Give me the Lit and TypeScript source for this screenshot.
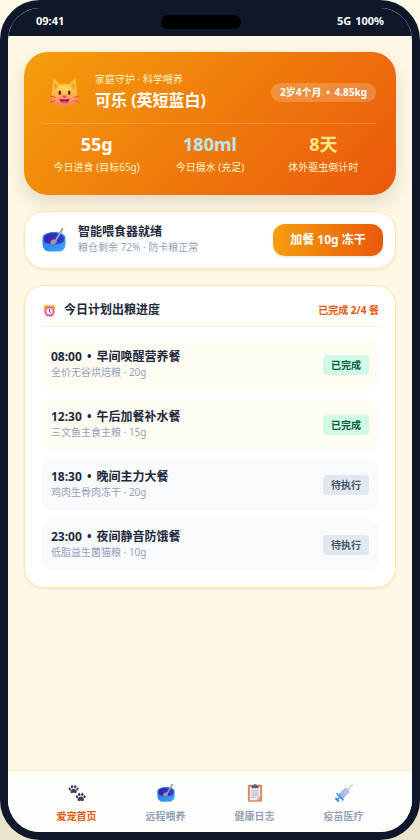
import { LitElement, html, css, svg } from "lit";
import { customElement } from "lit/decorators.js";
import { classMap } from "lit/directives/class-map.js";

const bowl = (id: string) => html`<svg viewBox="0 0 24 24" aria-hidden="true">
  <defs>
    <linearGradient id="${id}a" x1="0" y1="0" x2="1" y2="1"><stop offset="0" stop-color="#2b6fe0"/><stop offset="0.5" stop-color="#2f8bf2"/><stop offset="1" stop-color="#45a5fb"/></linearGradient>
    <linearGradient id="${id}b" x1="0" y1="0" x2="1" y2="0"><stop offset="0" stop-color="#3a20a8"/><stop offset="1" stop-color="#2840d8"/></linearGradient>
  </defs>
  <path d="M.5 9.500C.5 6.500 5.500 4 12 4s11.500 2.500 11.500 5.500V15c0 5-2.500 8.500-6.500 8.500H7C3 23.500.5 20 .5 15z" fill="url(#${id}a)"/>
  <path d="M2.200 9C3 6.700 7 5.300 12 5.300s9 1.400 9.800 3.700c.5 2.500.2 5-1.800 6-4 1.500-12 1.500-16 0-2-1-2.300-3.500-1.800-6z" fill="url(#${id}b)"/>
  <path d="M13.200 13.200 20.400 1" stroke="#8b8796" stroke-width="2" stroke-linecap="round"/>
  <path d="M14 12 20.500 1" stroke="#c9c5d0" stroke-width=".7" stroke-linecap="round"/>
  <path d="M8.500 15.500c-.6-2 1-4 3-4.200 2.300-.2 3.800 1.500 3 3.200-.5 1-1.500 1.300-2.800 1.500-1.200.2-2.500.3-3.200-.5z" fill="#9d99ab"/>
</svg>`;

const cat = html`<svg viewBox="0 0 32 32" aria-hidden="true">
  <defs>
    <linearGradient id="catFace" x1="0" y1="0" x2="0" y2="1"><stop offset="0" stop-color="#ffc02e"/><stop offset=".55" stop-color="#ffb846"/><stop offset="1" stop-color="#ff7c72"/></linearGradient>
    <radialGradient id="catGlow" cx=".5" cy=".3" r=".5"><stop offset="0" stop-color="#ffdb55"/><stop offset="1" stop-color="#ffdb55" stop-opacity="0"/></radialGradient>
  </defs>
  <path d="M3.500 2.200c.2-1 1.200-1.200 2-.5L12 7.500c2.500-.7 5.500-.7 8 0l6.500-5.800c.8-.7 1.800-.5 2 .5L29.500 14c.8 3 .8 6 .2 9-.7 4.500-3.500 7-8 7H10.300c-4.500 0-7.300-2.500-8-7-.6-3-.6-6 .2-9z" fill="url(#catFace)"/>
  <path d="M5 5.500 9.800 9.200 5 13zM27 5.500 22.200 9.200 27 13z" fill="#f2953d"/>
  <ellipse cx="16" cy="14" rx="12" ry="8" fill="url(#catGlow)"/>
  <ellipse cx="10.800" cy="16.300" rx="1.400" ry="2.400" fill="#4c2c38"/>
  <ellipse cx="21.200" cy="16.300" rx="1.400" ry="2.400" fill="#4c2c38"/>
  <path d="M14 19.200h4c.7 0 1 .6.500 1.100L16.700 22c-.4.400-1 .4-1.400 0l-1.800-1.700c-.5-.5-.2-1.100.5-1.100z" fill="#ff3d92"/>
  <path d="M10.500 22.800c3.500 1.200 7.500 1.200 11 0-.3 3-2.500 5-5.500 5s-5.200-2-5.500-5z" fill="#8d2145"/>
  <path d="M13 26.300c1.600-1 4.400-1 6 0-.8 1-1.800 1.500-3 1.500s-2.200-.5-3-1.500z" fill="#ff5b86"/>
  <path d="m.5 20 5 1.500M.5 26.500l5-1.700M31.500 20l-5 1.500M31.500 26.500l-5-1.700" stroke="#ef5055" stroke-width="1.200" stroke-linecap="round"/>
</svg>`;

const clock = html`<svg viewBox="0 0 24 24" aria-hidden="true">
  <path d="M5 20 3.500 23h4zM19 20l1.500 3h-4z" fill="#b9a3bd"/>
  <path d="M1 7.500C1 3.500 4 1 8.500 1.500L10 4 4 10zM23 7.500c0-4-3-6.500-7.500-6L14 4l6 6z" fill="#ffb52e"/>
  <path d="M10.500 1h3v4h-3z" fill="#c9a9bd"/>
  <circle cx="12" cy="13.500" r="9.500" fill="#f0577f"/>
  <circle cx="12" cy="13.500" r="6" fill="#fbe6f4"/>
  <path d="M12 9.500v4.300l2 1.700" fill="none" stroke="#4d4054" stroke-width="1.800" stroke-linecap="round"/>
</svg>`;

const paw = svg`<path d="M7.500 6.300c1.900 0 4.100 1.900 4.300 3.700.2 1.900-1.600 2.200-2.600 2-.9-.3-2.400-.3-3.400 0-1 .2-2.800-.1-2.600-2 .2-1.800 2.300-3.700 4.300-3.700z"/>
  <ellipse cx="2.400" cy="6.600" rx="1.500" ry="2" transform="rotate(-25 2.400 6.600)"/>
  <ellipse cx="5.400" cy="3.500" rx="1.600" ry="2.200"/>
  <ellipse cx="9.600" cy="3.500" rx="1.600" ry="2.200"/>
  <ellipse cx="12.600" cy="6.600" rx="1.500" ry="2" transform="rotate(25 12.600 6.600)"/>`;

const paws = html`<svg viewBox="0 0 24 24" aria-hidden="true">
  <g fill="#493a58"><g>${paw}</g><g transform="translate(9.500 10.500)">${paw}</g></g>
</svg>`;

const clipboard = html`<svg viewBox="0 0 24 24" aria-hidden="true">
  <rect x="2.500" y="1" width="19" height="22.500" rx="1.500" fill="#d8875f"/>
  <path d="M5 4h14v12.500L14.500 21.500H5z" fill="#f1edf8"/>
  <path d="M19 16.500 14.500 21.500H19z" fill="#f2a273"/>
  <path d="M14.500 21.500v-5H19z" fill="#cfc6dc"/>
  <path d="M7.500 5.500V3.200c0-.8.600-1.200 1.300-1.200h1C10.200.8 11 .3 12 .3s1.800.5 2.200 1.700h1c.7 0 1.300.4 1.300 1.200v2.300z" fill="#655a70"/>
  <path d="M7 9.200h10M7 12h10M7 14.800h10M7 17.600h6" stroke="#a9a0b8" stroke-width="1.200"/>
</svg>`;

const syringe = html`<svg viewBox="0 0 24 24" aria-hidden="true">
  <path d="M16.500 7.500 23.500.5" stroke="#a7a2b4" stroke-width="1"/>
  <path d="m14.800 4.800 4.400 4.400-2 1.800-4-4z" fill="#7cb2ef"/>
  <path d="M12.500 5.500c.8-.7 1.800-.7 2.500 0l4 4c.6.6.6 1.500 0 2.300l-9 8.700-6.500-6.500z" fill="#b7c3f2"/>
  <path d="m8.500 11 5 5-3.500 4.500-6-6z" fill="#a9b4ed"/>
  <path d="m12.700 7.800 1.800 1.800M10.700 9.800l1.800 1.800M8.700 11.800l1.800 1.800" stroke="#7290d8" stroke-width=".9"/>
  <path d="m2.800 13.200 8 8" stroke="#3f91e8" stroke-width="2.200" stroke-linecap="round"/>
  <path d="m6 18-3.200 3.200" stroke="#4a83db" stroke-width="2"/>
  <path d="m1.200 19.500 3.300 3.300" stroke="#2b83e6" stroke-width="2.400" stroke-linecap="round"/>
</svg>`;

const dot = html`<span class="dot">•</span>`;

const stats = [
  { value: "55g", label: "今日进食 (目标65g)", tone: "white" },
  { value: "180ml", label: "今日摄水 (充足)", tone: "blue" },
  { value: "8天", label: "体外驱虫倒计时", tone: "yellow" },
];

const meals = [
  { time: "08:00", title: "早间唤醒营养餐", detail: "全价无谷烘焙粮 · 20g", done: true },
  { time: "12:30", title: "午后加餐补水餐", detail: "三文鱼主食主粮 · 15g", done: true },
  { time: "18:30", title: "晚间主力大餐", detail: "鸡肉生骨肉冻干 · 20g", done: false },
  { time: "23:00", title: "夜间静音防饿餐", detail: "低脂益生菌猫粮 · 10g", done: false },
];

const tabs = [
  { label: "爱宠首页", icon: paws, active: true },
  { label: "远程喂养", icon: bowl("tabBowl"), active: false },
  { label: "健康日志", icon: clipboard, active: false },
  { label: "疫苗医疗", icon: syringe, active: false },
];

@customElement("app-root")
export class AppRoot extends LitElement {
  static styles = css`
    :host {
      display: block;
      background: linear-gradient(#fefae9, #eae2cb);
      font-family: "Noto Sans", "Noto Sans CJK SC", sans-serif;
      font-size: 12px;
      line-height: 16px;
      color: #1e293b;
    }
    * { box-sizing: border-box; margin: 0; padding: 0; }
    svg { display: block; width: 100%; height: 100%; overflow: visible; }
    .phone {
      display: flex;
      flex-direction: column;
      min-height: 100vh;
      border: 8px solid #0f172a;
      border-radius: 40px;
      background: #fff8e6;
      overflow: hidden;
    }
    .status {
      display: flex;
      justify-content: space-between;
      align-items: center;
      height: 28px;
      padding: 0 28px;
      background: #0f172a;
      color: #fff;
      font-size: 11px;
      font-weight: 700;
    }
    .time, .signal { padding-bottom: 2px; }
    .island { width: 80px; height: 14px; border-radius: 7px; background: #000; }
    .signal { display: flex; gap: 4px; }
    main { flex: 1; display: flex; flex-direction: column; gap: 16px; padding: 16px; }
    .hero {
      padding: 20px;
      border-radius: 24px;
      background: linear-gradient(135deg, #f59e0b, #ea580c);
      box-shadow: 0 8px 20px rgba(80, 60, 20, 0.16);
      color: #fff;
    }
    .pet { display: flex; align-items: center; gap: 16px; height: 40px; padding-left: 6px; }
    .pet-icon { flex: none; width: 29px; height: 29px; }
    .grow { flex: 1; min-width: 0; }
    .dot { padding: 0 2px; }
    .eyebrow { margin-bottom: 2px; font-size: 10px; line-height: 14px; color: #fef3c7; }
    h1 { font-size: 16px; line-height: 24px; font-weight: 700; }
    .pill {
      padding: 0 9px;
      border-radius: 10px;
      background: rgba(255, 255, 255, 0.2);
      font-size: 10px;
      line-height: 19px;
      font-weight: 700;
      white-space: nowrap;
    }
    .stats {
      display: grid;
      grid-template-columns: repeat(3, 1fr);
      gap: 8px;
      margin-top: 11px;
      padding-top: 9px;
      border-top: 1px solid rgba(255, 255, 255, 0.2);
      text-align: center;
    }
    .value { margin-bottom: 4px; font-size: 18px; line-height: 22px; font-weight: 700; }
    .blue { color: #bae6fd; }
    .yellow { color: #fde68a; }
    .label { font-size: 10px; line-height: 16px; color: #fef3c7; white-space: nowrap; }
    .card {
      border: 1px solid #fde9a4;
      border-radius: 20px;
      background: #fff;
      box-shadow: 0 1px 3px rgba(120, 90, 20, 0.1);
    }
    .feeder { display: flex; align-items: center; gap: 12px; padding: 12px 12px 12px 17px; }
    .feeder-icon { flex: none; width: 24px; height: 24px; }
    h2, h3 { font-size: 12px; line-height: 16px; font-weight: 700; }
    .sub { padding-bottom: 2px; font-size: 10px; line-height: 14px; color: #94a3b8; }
    button {
      min-width: 110px;
      height: 32px;
      padding: 0 16px;
      border: 0;
      border-radius: 12px;
      background: linear-gradient(90deg, #f59e0b, #ea580c);
      box-shadow: 0 1px 3px rgba(0, 0, 0, 0.14);
      color: #fff;
      font: inherit;
      font-weight: 700;
      white-space: nowrap;
    }
    .plan { padding: 16px; }
    .plan-head {
      display: flex;
      align-items: center;
      gap: 8px;
      padding: 0 0 8px 2px;
      border-bottom: 1px solid #fef0c3;
    }
    .clock { flex: none; width: 13px; height: 13px; }
    .progress { font-size: 10px; font-weight: 700; color: #ea580c; }
    ul { display: grid; gap: 8px; margin-top: 12px; list-style: none; }
    .meal {
      display: flex;
      align-items: center;
      padding: 10px;
      border-radius: 12px;
      background: #f8fafc;
    }
    .meal.done { background: #fffcf3; }
    .badge {
      padding: 0 8px;
      border-radius: 4px;
      background: #e2e8f0;
      color: #475569;
      font-size: 10px;
      line-height: 20px;
      font-weight: 700;
    }
    .done .badge { background: #d1fae5; color: #065f46; }
    nav {
      display: grid;
      grid-template-columns: repeat(4, 1fr);
      height: 62px;
      padding: 13px 24px 0;
      border-top: 1px solid #ffedb3;
      background: #fefefd;
    }
    nav a {
      display: flex;
      flex-direction: column;
      align-items: center;
      gap: 6px;
      color: #94a3b8;
      font-size: 10px;
      font-weight: 700;
      text-decoration: none;
    }
    nav a.active { color: #ea580c; }
    .tab-icon { width: 18px; height: 18px; }
  `;

  render() {
    return html`<div class="phone">
      <header class="status">
        <span class="time">09:41</span>
        <span class="island"></span>
        <span class="signal"><span>5G</span><span>100%</span></span>
      </header>
      <main>
        <section class="hero">
          <div class="pet">
            <div class="pet-icon">${cat}</div>
            <div class="grow">
              <p class="eyebrow">家庭守护 · 科学喂养</p>
              <h1>可乐 (英短蓝白)</h1>
            </div>
            <span class="pill">2岁4个月 ${dot} 4.85kg</span>
          </div>
          <div class="stats">
            ${stats.map((s) => html`<div>
              <p class="value ${s.tone}">${s.value}</p>
              <p class="label">${s.label}</p>
            </div>`)}
          </div>
        </section>
        <section class="card feeder">
          <div class="feeder-icon">${bowl("feeder")}</div>
          <div class="grow">
            <h2>智能喂食器就绪</h2>
            <p class="sub">粮仓剩余 72% · 防卡粮正常</p>
          </div>
          <button type="button">加餐 10g 冻干</button>
        </section>
        <section class="card plan">
          <div class="plan-head">
            <div class="clock">${clock}</div>
            <h2 class="grow">今日计划出粮进度</h2>
            <span class="progress">已完成 2/4 餐</span>
          </div>
          <ul>
            ${meals.map((m) => html`<li class=${classMap({ meal: true, done: m.done })}>
              <div class="grow">
                <h3>${m.time} ${dot} ${m.title}</h3>
                <p class="sub">${m.detail}</p>
              </div>
              <span class="badge">${m.done ? "已完成" : "待执行"}</span>
            </li>`)}
          </ul>
        </section>
      </main>
      <nav>
        ${tabs.map((t) => html`<a href="#" class=${classMap({ active: t.active })}>
          <span class="tab-icon">${t.icon}</span>
          <span>${t.label}</span>
        </a>`)}
      </nav>
    </div>`;
  }
}
